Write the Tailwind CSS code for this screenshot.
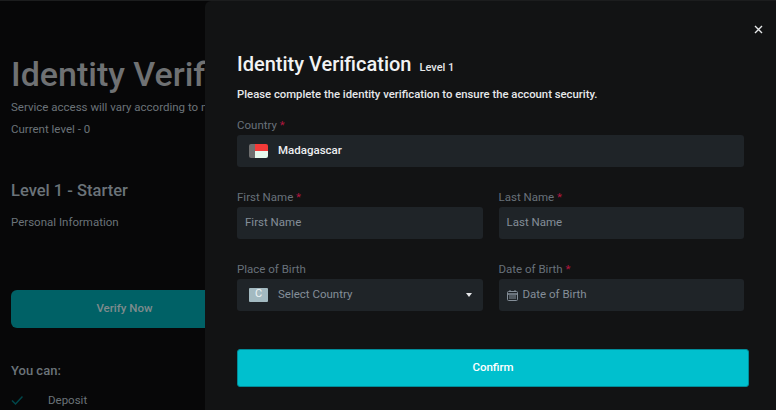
<!DOCTYPE html>
<html lang="en">
<head>
    <meta charset="UTF-8">
    <title>Identity Verification</title>
    <script src="https://cdn.jsdelivr.net/npm/@tailwindcss/browser@4"></script>
</head>
<body class="h-[410px] w-[776px] overflow-hidden bg-[#070708] font-['Roboto',sans-serif]">
    <div class="relative h-[410px] w-[776px] overflow-hidden border-t border-[#1c1d1e]">
        <!-- page behind the drawer -->
        <div class="h-full w-[205px] overflow-hidden pl-[11px]">
            <h1 class="mt-[53px] whitespace-nowrap text-[34px] leading-[40px] font-medium text-[#6f7173]">Identity Verification</h1>
            <p class="mt-[5px] whitespace-nowrap text-[11.5px] leading-[16px] text-[#6b7379]">Service access will vary according to nationality</p>
            <p class="mt-[6px] text-[11.5px] leading-[16px] text-[#6b7379]">Current level - 0</p>
            <h2 class="mt-[44px] text-[16.5px] leading-[20px] font-medium text-[#6b7379]">Level 1 - Starter</h2>
            <p class="mt-[13px] text-[11.5px] leading-[16px] text-[#6b7379]">Personal Information</p>
            <div class="mt-[60px] flex h-[38px] w-[227px] items-center justify-center rounded-[6px] bg-[#006166] text-[11.5px] font-medium text-[#7f8b8d]">Verify Now</div>
            <p class="mt-[34px] text-[13px] leading-[18px] font-medium text-[#6b7379]">You can:</p>
            <div class="mt-[12px] flex items-center gap-[25px]">
                <svg class="h-[12px] w-[12px]" viewBox="0 0 12 12" fill="none" stroke="#00474b" stroke-width="1.5"><path d="M1 6.5 4.5 10 11.5 2.5"/></svg>
                <span class="text-[11.5px] leading-[16px] text-[#6b7379]">Deposit</span>
            </div>
        </div>

        <!-- drawer -->
        <div class="absolute top-0 bottom-0 left-[205px] w-[571px] rounded-tl-[6px] bg-[#121314] pt-[51px] pr-[32px] pl-[32px]">
            <button class="absolute top-[24px] right-[13px] text-[#e6e8ea]">
                <svg class="h-[9px] w-[9px]" viewBox="0 0 9 9" fill="none" stroke="currentColor" stroke-width="1.4"><path d="M1 1 8 8M8 1 1 8"/></svg>
            </button>
            <div class="flex items-baseline gap-[8px]">
                <h2 class="text-[20px] leading-[24px] font-medium text-[#f2f3f4]">Identity Verification</h2>
                <span class="text-[11px] font-medium text-[#e6e8ea]">Level 1</span>
            </div>
            <p class="mt-[10px] text-[11.3px] leading-[16px] font-medium text-[#e6e8ea]">Please complete the identity verification to ensure the account security.</p>

            <label class="mt-[14px] block text-[11.5px] leading-[16px] text-[#68717a]">Country <span class="text-[#b0173f]">*</span></label>
            <div class="mt-[2px] flex h-[32px] items-center rounded-[3px] bg-[#1f2428] pl-[12px]">
                <svg class="h-[14px] w-[19px] shrink-0 rounded-[2px]" viewBox="0 0 19 14"><rect width="6" height="14" fill="#6f6f6f"/><rect x="6" width="13" height="7" fill="#f33a38"/><rect x="6" y="7" width="13" height="7" fill="#e6f8ec"/></svg>
                <span class="ml-[10px] pt-px text-[11.5px] font-medium text-[#eceef0]">Madagascar</span>
            </div>

            <div class="mt-[22px] grid grid-cols-2 gap-x-[16px]">
                <div>
                    <label class="block text-[11.5px] leading-[16px] text-[#68717a]">First Name <span class="text-[#b0173f]">*</span></label>
                    <div class="mt-[2px] flex h-[32px] items-center rounded-[3px] bg-[#1f2428] pt-px pl-[8px] text-[11.5px] text-[#848e98]">First Name</div>
                </div>
                <div>
                    <label class="block text-[11.5px] leading-[16px] text-[#68717a]">Last Name <span class="text-[#b0173f]">*</span></label>
                    <div class="mt-[2px] flex h-[32px] items-center rounded-[3px] bg-[#1f2428] pt-px pl-[8px] text-[11.5px] text-[#848e98]">Last Name</div>
                </div>
            </div>

            <div class="mt-[22px] grid grid-cols-2 gap-x-[16px]">
                <div>
                    <label class="block text-[11.5px] leading-[16px] text-[#68717a]">Place of Birth</label>
                    <div class="mt-[2px] flex h-[32px] items-center rounded-[3px] bg-[#1f2428] pr-[11px] pl-[12px]">
                        <span class="flex h-[14px] w-[19px] shrink-0 items-center justify-center rounded-[1px] bg-[#a3bac1] text-[11px] text-[#eef3f4]">C</span>
                        <span class="ml-[10px] flex-1 pt-px text-[11.5px] text-[#848e98]">Select Country</span>
                        <span class="h-0 w-0 border-x-[3px] border-t-[4px] border-x-transparent border-t-[#e6e8ea]"></span>
                    </div>
                </div>
                <div>
                    <label class="block text-[11.5px] leading-[16px] text-[#68717a]">Date of Birth <span class="text-[#b0173f]">*</span></label>
                    <div class="mt-[2px] flex h-[32px] items-center gap-[5px] rounded-[3px] bg-[#1f2428] pt-px pl-[8px] text-[11.5px] text-[#848e98]">
                        <svg class="h-[11px] w-[11px]" viewBox="0 0 11 11" fill="none" stroke="#848e98"><rect x="0.5" y="1.5" width="10" height="9" rx="1"/><path d="M0.5 4H10.5" stroke-width="1.5"/><path d="M3 0V2M8 0V2M2 6H9M2 8H9" /></svg>
                        Date of Birth
                    </div>
                </div>
            </div>

            <button class="mt-[38px] flex h-[38px] w-[512px] items-center justify-center rounded-[3px] border border-[#008c99] bg-[#00c0ce] pt-px text-[11.5px] font-medium text-white">Confirm</button>
        </div>
    </div>
</body>
</html>
